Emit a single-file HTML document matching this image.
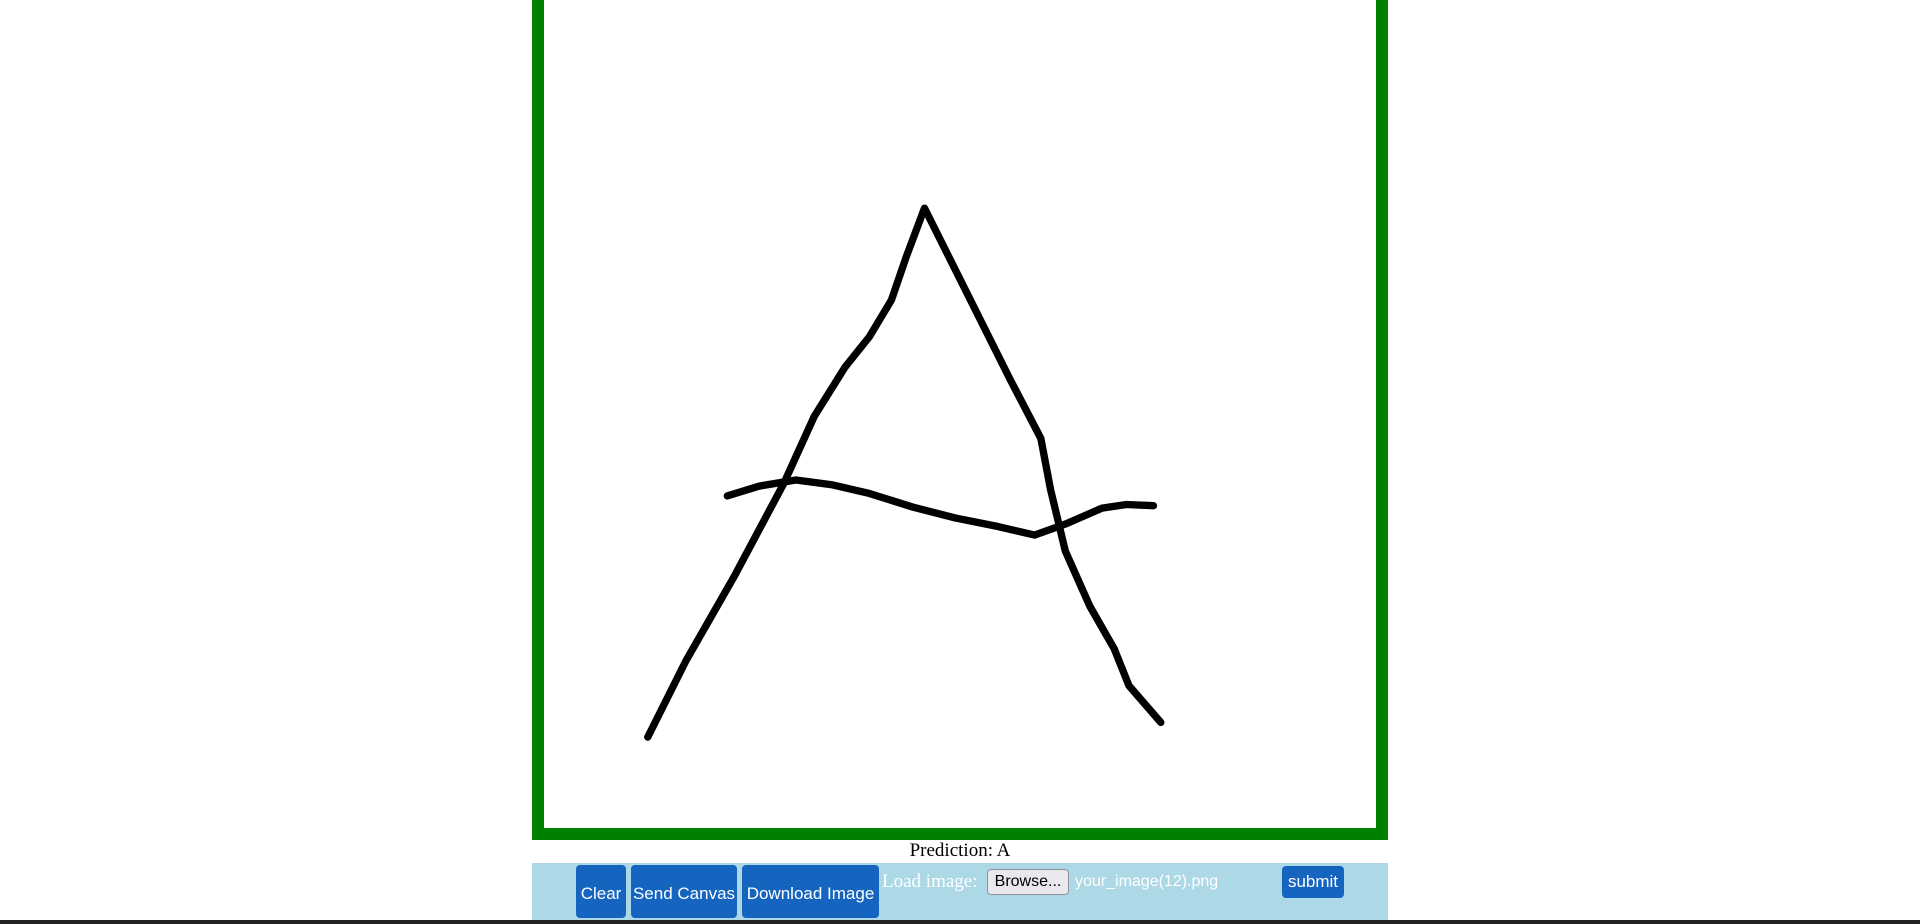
<!DOCTYPE html>
<html><head><meta charset="utf-8"><style>
html,body{margin:0;padding:0;width:1920px;height:924px;overflow:hidden;background:#fff;position:relative}
.box{position:absolute;left:532px;top:-20px;width:832px;height:836px;border:12px solid #008000;background:#fff}
.pred{position:absolute;left:532px;width:856px;top:840px;text-align:center;font:19px "Liberation Serif",serif;color:#000}
.bar{position:absolute;left:532px;top:863px;width:856px;height:57px;background:#add8e6}
.btn{position:absolute;background:#1565c0;color:#fff;border-radius:4px;font:17px "Liberation Sans",sans-serif;text-align:center;box-sizing:border-box}
.tall{top:865px;height:53px;line-height:58px}
.dark{position:absolute;left:0;top:920px;width:1920px;height:4px;background:#222}
.lbl{position:absolute;top:871px;left:882px;font:19px "Liberation Serif",serif;color:#fff}
.browse{position:absolute;left:987px;top:869px;width:82px;height:26px;box-sizing:border-box;background:#e9e9ed;border:1px solid #8f8f9d;border-radius:4px;font:16px "Liberation Sans",sans-serif;line-height:24px;text-align:center;color:#000}
.fn{position:absolute;left:1075px;top:873px;font:16px "Liberation Sans",sans-serif;color:#fff}
</style></head><body>
<div class="box"></div>
<svg style="position:absolute;left:0;top:0" width="1920" height="924" viewBox="0 0 1568 754.6">
<g fill="none" stroke="#000" stroke-width="6" stroke-linecap="round" stroke-linejoin="round">
<polyline points="529,602 560,540 600,470 640,395 665,340 690,300 710,275 728,245 740,210 755,170 790,240 825,310 850,358 858,400 870,450 890,495 910,530 922,560 935,575 948,590"/>
<polyline points="594,405 620,397 650,392 680,396 710,403 745,414 780,423 815,430 845,437 870,428 900,415 920,412 942,413"/>
</g></svg>
<div class="pred">Prediction: A</div>
<div class="bar"></div>
<div class="btn tall" style="left:576px;width:50px">Clear</div>
<div class="btn tall" style="left:631px;width:106px">Send Canvas</div>
<div class="btn tall" style="left:742px;width:137px">Download Image</div>
<div class="lbl">Load image:</div>
<div class="browse">Browse...</div>
<div class="fn">your_image(12).png</div>
<div class="btn" style="left:1282px;top:866px;width:62px;height:32px;line-height:32px">submit</div>
<div class="dark"></div>
</body></html>
